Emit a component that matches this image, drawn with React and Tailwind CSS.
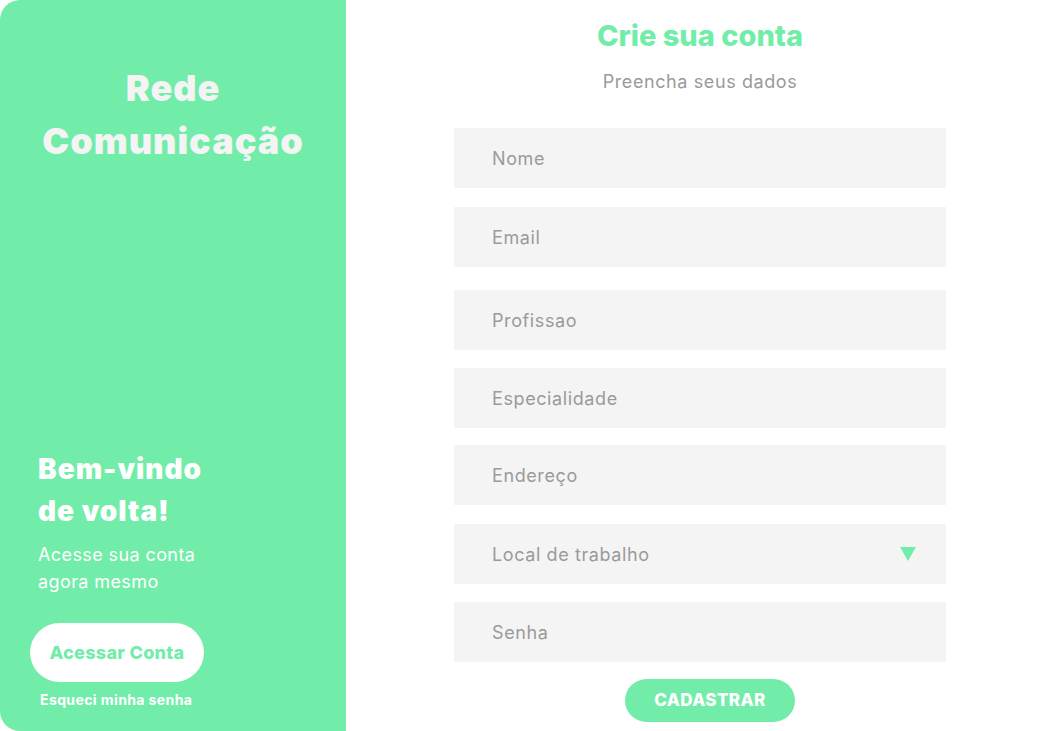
import React from "react";

const fields = [
  { label: "Nome", mt: "mt-[34px]" },
  { label: "Email", mt: "mt-[19px]" },
  { label: "Profissao", mt: "mt-[23px]" },
  { label: "Especialidade", mt: "mt-[18px]" },
  { label: "Endereço", mt: "mt-[17px]" },
  { label: "Local de trabalho", mt: "mt-[19px]", select: true },
  { label: "Senha", mt: "mt-[18px]" },
];

export default function App() {
  return (
    <div className="flex h-[731px] w-[1050px] bg-white font-['Inter',sans-serif]">
      <aside className="flex w-[346px] shrink-0 flex-col rounded-l-[20px] bg-[#72eda9] text-white">
        <h1 className="mt-[62px] text-center text-[36px] font-black leading-[53px] tracking-[1px] text-[#f4f4f4]">
          Rede
          <br />
          Comunicação
        </h1>
        <div className="mt-auto px-[38px]">
          <h2 className="text-[28px] font-black leading-[42px] tracking-[1px]">
            Bem-vindo
            <br />
            de volta!
          </h2>
          <p className="mt-[9px] text-[18px] leading-[27px] tracking-[0.4px]">
            Acesse sua conta
            <br />
            agora mesmo
          </p>
        </div>
        <div className="mt-[28px] pl-[30px]">
          <button className="flex h-[59px] w-[174px] items-center justify-center rounded-full bg-white text-[18px] font-extrabold tracking-[0.3px] text-[#72eda9]">
            Acessar Conta
          </button>
        </div>
        <p className="mb-[22px] mt-[9px] pl-[40px] text-[14px] font-bold leading-[18px] tracking-[0.4px]">
          Esqueci minha senha
        </p>
      </aside>
      <main className="flex flex-1 flex-col items-center pl-[4px]">
        <h2 className="mt-[18px] text-[29px] font-extrabold leading-[36px] text-[#72eda9]">
          Crie sua conta
        </h2>
        <p className="mt-[16px] text-[18px] leading-[24px] tracking-[0.6px] text-[#9a9a9a]">
          Preencha seus dados
        </p>
        {fields.map((f) => (
          <div
            key={f.label}
            className={`${f.mt} flex h-[60px] w-[492px] items-center justify-between bg-[#f4f4f4] pl-[38px] pr-[30px]`}
          >
            <input
              className="w-full bg-transparent text-[18px] tracking-[0.6px] text-[#444] outline-none placeholder:text-[#9a9a9a]"
              placeholder={f.label}
              readOnly
            />
            {f.select && (
              <svg width="16" height="14" viewBox="0 0 16 14" className="shrink-0">
                <path d="M0 0 L16 0 L8 14 Z" fill="#72eda9" />
              </svg>
            )}
          </div>
        ))}
        <button className="ml-[20px] mt-[17px] h-[43px] w-[170px] rounded-full bg-[#72eda9] text-[17px] font-extrabold tracking-[0.4px] text-white">
          CADASTRAR
        </button>
      </main>
    </div>
  );
}
